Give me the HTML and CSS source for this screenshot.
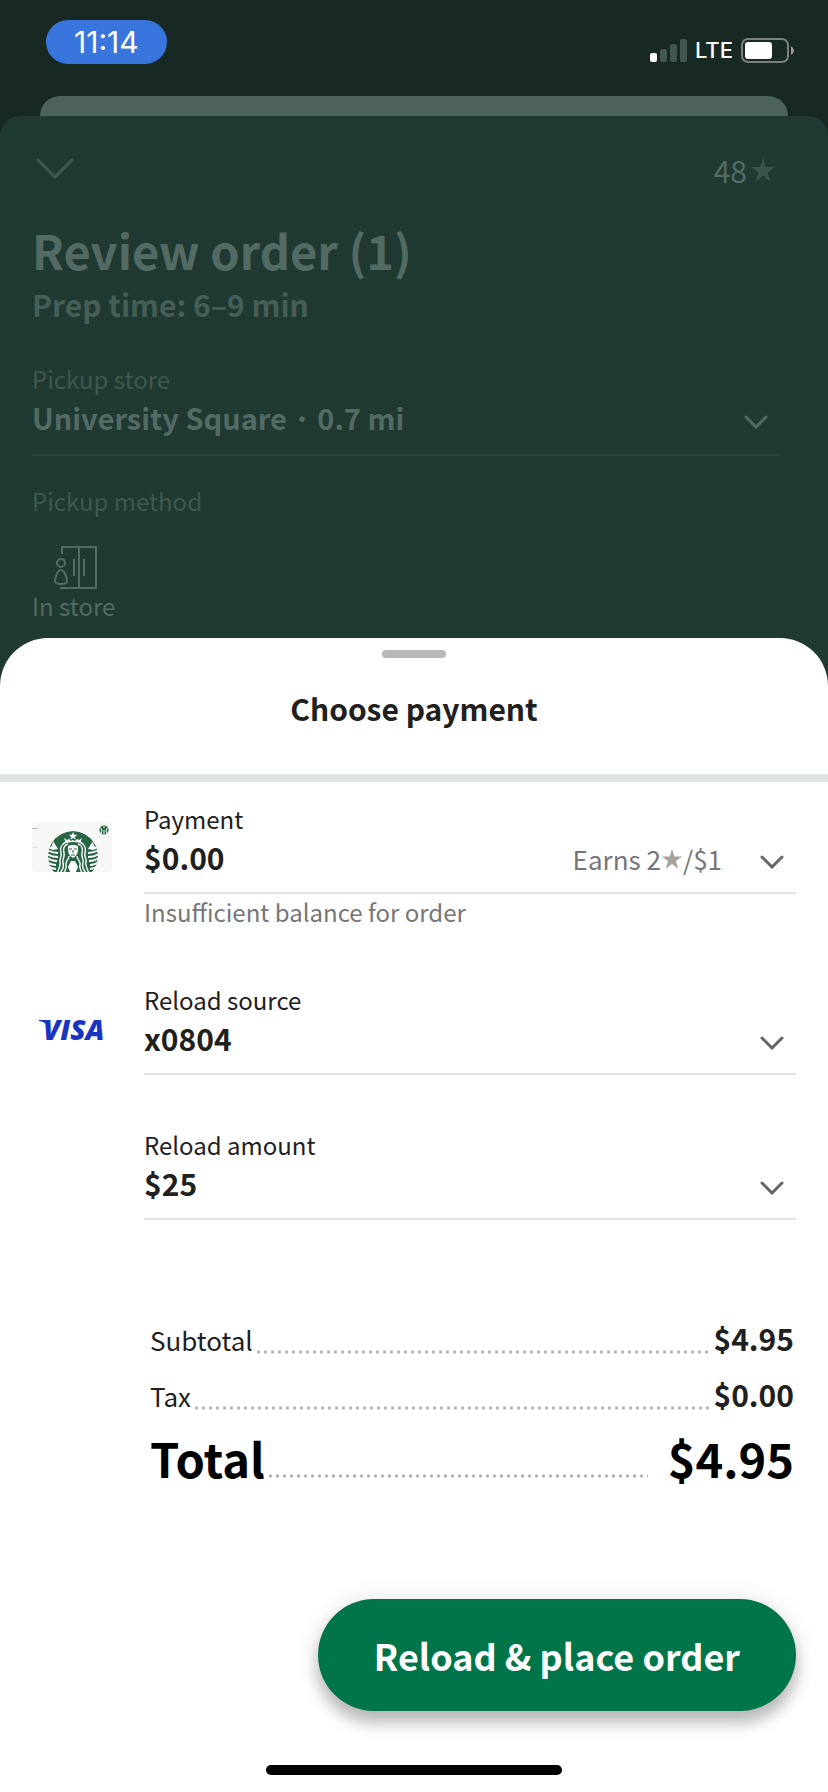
FILE: index.html
```html
<!DOCTYPE html>
<html lang="en">
<head>
    <meta charset="UTF-8">
    <meta name="viewport" content="width=device-width, initial-scale=1.0">
    <title>Review order</title>
    <link rel="stylesheet" href="styles.css">
</head>
<body>
    <header class="status-bar">
        <span class="clock">11:14</span>
        <div class="status-icons">
            <svg class="signal" viewBox="0 0 37 23" aria-hidden="true">
                <rect x="0" y="14" width="7" height="9" rx="2" fill="#fff"/>
                <rect x="10" y="10" width="7" height="13" rx="2" fill="#435752"/>
                <rect x="20" y="5" width="7" height="18" rx="2" fill="#435752"/>
                <rect x="30" y="0" width="7" height="23" rx="2" fill="#435752"/>
            </svg>
            <span class="network">LTE</span>
            <svg class="battery" viewBox="0 0 53 25" aria-hidden="true">
                <rect x="1" y="1" width="46" height="23" rx="6" fill="none" stroke="#7b7f7d" stroke-width="2"/>
                <rect x="4" y="4" width="27" height="17" rx="3" fill="#fff"/>
                <path d="M50 8q3 2 3 4.500t-3 4.500z" fill="#9b9d9c"/>
            </svg>
        </div>
    </header>

    <div class="back-card"></div>

    <main class="order">
        <div class="order-top">
            <button type="button" class="close" aria-label="Close">
                <svg viewBox="0 0 38 21"><path d="M2 2l17 17L36 2" fill="none" stroke="currentColor" stroke-width="3" stroke-linecap="round"/></svg>
            </button>
            <p class="stars">48<svg class="star" viewBox="0 0 24 24"><path d="M12 1l2.600 8.200H23l-6.800 5 2.600 8.300L12 17.400l-6.800 5.100 2.600-8.300L1 9.200h8.400z"/></svg></p>
        </div>
        <h1>Review order (1)</h1>
        <p class="prep">Prep time: 6–9 min</p>

        <div class="field store">
            <label for="store">Pickup store</label>
            <div class="control">
                <select id="store"><option>University Square · 0.7 mi</option></select>
                <svg class="chevron" viewBox="0 0 24 14"><path d="M2 2l10 10L22 2"/></svg>
            </div>
        </div>

        <p class="method-title">Pickup method</p>
        <button type="button" class="method">
            <svg viewBox="0 0 44 45" fill="none" stroke="currentColor" stroke-width="2">
                <path d="M8 9V2h34v41H6M25 2v41M20 14v17M30 14v17" />
                <circle cx="7" cy="18" r="4"/>
                <path d="M7 25c-3 0-6 7-6 11q0 3 6 3t6-3c0-4-3-11-6-11z"/>
            </svg>
            In store
        </button>
    </main>

    <section class="sheet">
        <div class="handle"></div>
        <h2>Choose payment</h2>

        <form class="payment">
            <div class="row">
                <svg class="card" viewBox="0 0 80 50" aria-hidden="true">
                    <defs>
                        <clipPath id="card-clip"><rect width="80" height="50" rx="3"/></clipPath>
                        <clipPath id="seal-clip"><circle cy="34" r="25"/></clipPath>
                        <!-- right half of the siren, mirrored for the left -->
                        <g id="half" fill="none" stroke="#fff">
                            <path d="M5 22c4 1 5 5 4 9s2 6 1 10 0 6 3 10" stroke-width="1.400"/>
                            <path d="M7 20c5 2 6 7 5 11s2 6 1 9 1 7 3 11" stroke-width="1.400"/>
                            <path d="M4 34c0 4 4 5 3 9s1 6 3 9" stroke-width="1.400"/>
                            <path d="M15 27l5-8 1 5 4 2-5 2z" fill="#fff" stroke="none"/>
                            <path d="M15 31q5 0 11-3M15 35q6 0 11-3M16 39q5 0 10-3M17 43q4 0 9-3M17 47q4 0 8-3M18 51q3 0 6-3" stroke-width="2"/>
                        </g>
                    </defs>
                    <g clip-path="url(#card-clip)">
                        <rect width="80" height="50" fill="#f7f7f6"/>
                        <path d="M0 6.500h6" stroke="#bbb"/>
                        <path d="M0 25.500h6" stroke="#e4e4e4"/>
                        <g transform="translate(41 0)" clip-path="url(#seal-clip)">
                            <circle cy="34" r="25" fill="#286545"/>
                            <path d="M0 10l1.200 2.800h3l-2.300 1.900.8 2.900L0 15.900l-2.700 1.700.8-2.900-2.300-1.900h3z" fill="#fff"/>
                            <path d="M-9 16l3 2 2-1 2 2 2-1 2 1 2-2 2 1 3-2-2 5q-7-2-14 0z" fill="#fff"/>
                            <path d="M-5 24q5-2 10 0 1 9-5 12-6-3-5-12z" fill="#fff"/>
                            <path d="M-4 27h3M1 27h3M0 28v3M-2 33h4" stroke="#286545"/>
                            <path d="M-2 39h4l3 6-3 7h-4l-3-7z" fill="#fff"/>
                            <use href="#half"/>
                            <use href="#half" transform="scale(-1 1)"/>
                        </g>
                        <circle cx="72" cy="8" r="4.500" fill="#286545"/>
                        <path d="M69 12q2-3 0-6M75 12q-2-3 0-6M71 5h2M72 8v4" stroke="#f7f7f6" fill="none"/>
                    </g>
                </svg>
                <div class="field">
                    <label for="card">Payment</label>
                    <div class="control">
                        <select id="card"><option>$0.00</option></select>
                        <span class="earns">Earns 2<svg class="star" viewBox="0 0 24 24"><path d="M12 1l2.600 8.200H23l-6.800 5 2.600 8.300L12 17.400l-6.800 5.100 2.600-8.300L1 9.200h8.400z"/></svg>/$1</span>
                        <svg class="chevron" viewBox="0 0 24 14"><path d="M2 2l10 10L22 2"/></svg>
                    </div>
                    <p class="note">Insufficient balance for order</p>
                </div>
            </div>

            <div class="row">
                <svg class="visa" viewBox="0 0 80 48">
                    <path d="M7 12h9l2 8Q14 14 7 13z"/>
                    <text x="11" y="32">VISA</text>
                </svg>
                <div class="field">
                    <label for="source">Reload source</label>
                    <div class="control">
                        <select id="source"><option>x0804</option></select>
                        <svg class="chevron" viewBox="0 0 24 14"><path d="M2 2l10 10L22 2"/></svg>
                    </div>
                </div>
            </div>

            <div class="row">
                <span></span>
                <div class="field">
                    <label for="amount">Reload amount</label>
                    <div class="control">
                        <select id="amount"><option>$25</option></select>
                        <svg class="chevron" viewBox="0 0 24 14"><path d="M2 2l10 10L22 2"/></svg>
                    </div>
                </div>
            </div>

            <dl class="totals">
                <div class="line"><dt>Subtotal</dt><dd>$4.95</dd></div>
                <div class="line"><dt>Tax</dt><dd>$0.00</dd></div>
                <div class="line total"><dt>Total</dt><dd>$4.95</dd></div>
            </dl>

            <button type="submit" class="submit">Reload &amp; place order</button>
        </form>
        <div class="home"></div>
    </section>
</body>
</html>
```
FILE: styles.css
```css
*{
    margin: 0;
    padding: 0;
    box-sizing: border-box;
}

body{
    min-height: 100vh;
    display: flex;
    flex-direction: column;
    background-color: #182924;
    font-family: "Noto Sans CJK JP", "Noto Sans", sans-serif;
    font-size: 24px;
    line-height: 36px;
    color: #1f2020;
}

button, select{
    font: inherit;
    color: inherit;
    border: none;
    background: transparent;
    appearance: none;
}

svg{
    display: block;
}

/* status bar */
.status-bar{
    height: 96px;
    padding: 20px 34px 0 46px;
    display: flex;
    justify-content: space-between;
    align-items: flex-start;
    font-family: Inter, sans-serif;
    color: white;
}

.clock{
    padding: 0 28px;
    border-radius: 22px;
    background-color: #3875dc;
    font-size: 30px;
    line-height: 44px;
}

.status-icons{
    padding-top: 16px;
    display: flex;
    align-items: center;
    gap: 8px;
}

.signal{
    width: 37px;
}

.network{
    font-size: 22px;
    line-height: 28px;
    font-weight: 500;
}

.battery{
    width: 53px;
}

.back-card{
    height: 20px;
    margin: 0 40px;
    border-radius: 20px 20px 0 0;
    background-color: #4d625b;
}

/* dimmed order page, its foot runs under the sheet */
.order{
    padding: 32px 48px 64px 32px;
    margin-bottom: -48px;
    border-radius: 20px 20px 0 0;
    background-color: #203932;
    color: #536b64;
}

.order-top{
    display: flex;
    justify-content: space-between;
    align-items: center;
    margin-bottom: 30px;
}

.close{
    padding: 0 4px 4px;
    color: #3f5750;
}

.close svg{
    width: 38px;
}

.stars{
    display: flex;
    align-items: center;
    gap: 3px;
    padding-right: 4px;
    font-size: 30px;
    line-height: 44px;
}

.star{
    width: 26px;
    fill: #3c534d;
}

h1{
    font-size: 47px;
    line-height: 56px;
}

.prep{
    margin-top: 2px;
    font-size: 30px;
    line-height: 48px;
    font-weight: bold;
    color: #465e57;
}

.store{
    margin-top: 33px;
}

.store label, .method-title{
    color: #3f5750;
}

.method-title{
    margin: 27px 0 26px;
}

.method{
    display: flex;
    flex-direction: column;
    line-height: 32px;
}

.method svg{
    width: 44px;
    margin-left: 22px;
}

/* labelled drop-downs */
.field{
    flex: 1;
}

label{
    display: block;
}

.control{
    display: flex;
    align-items: center;
    padding: 0 12px 15px 0;
    border-bottom: 2px solid #dde4e2;
}

select{
    flex: 1;
    min-width: 0;
    height: 40px;
    font-size: 30px;
    line-height: 40px;
    font-weight: bold;
}

.chevron{
    width: 24px;
    margin-top: 10px;
    fill: none;
    stroke: #666;
    stroke-width: 3;
    stroke-linecap: round;
}

.store .control{
    padding-bottom: 17px;
    border-color: #2a423b;
}

.store select{
    font-size: 29px;
}

.store .chevron{
    stroke: #536b64;
}

/* payment sheet */
.sheet{
    flex: 1;
    padding: 12px 0 16px;
    border-radius: 48px 48px 0 0;
    background-color: white;
}

.handle{
    width: 64px;
    height: 8px;
    margin: 0 auto 28px;
    border-radius: 4px;
    background-color: #b8b8b8;
}

h2{
    padding-bottom: 44px;
    border-bottom: 8px solid #dde5e2;
    font-size: 30px;
    line-height: 44px;
    text-align: center;
}

.payment{
    padding: 19px 32px 0;
}

.row{
    display: flex;
    gap: 32px;
    margin-bottom: 52px;
}

.row > :first-child{
    width: 80px;
}

.card{
    height: 50px;
    margin-top: 21px;
}

.visa{
    height: 48px;
    margin-top: 26px;
    fill: #1a34c2;
    font-family: "Open Sans", sans-serif;
    font-size: 28px;
    font-style: italic;
    font-weight: 800;
}

.earns{
    display: flex;
    align-items: center;
    margin: 4px 38px 0 0;
    font-size: 26px;
    color: #767676;
}

.earns .star{
    width: 22px;
    fill: #a8a49c;
}

.note{
    color: #767676;
}

/* order totals */
.totals{
    margin: 90px 2px 105px 118px;
}

.line{
    display: flex;
    align-items: baseline;
    height: 56px;
    line-height: 56px;
}

dt{
    flex: 1;
    display: flex;
    font-size: 26px;
}

/* dotted leader */
dt::after{
    content: "";
    flex: 1;
    height: 4px;
    margin: 38px 4px 0 2px;
    background: radial-gradient(circle, #aaa 1px, transparent 2px) 0 0 / 7px 4px repeat-x;
}

dd{
    font-size: 30px;
    font-weight: bold;
}

.total{
    height: 72px;
    line-height: 72px;
    color: black;
}

.total dt, .total dd{
    font-size: 47px;
    font-weight: bold;
}

.total dt::after{
    margin: 52px 20px 0 2px;
}

.submit{
    display: block;
    margin-left: auto;
    padding: 0 56px;
    border-radius: 56px;
    background-color: #00754a;
    box-shadow: 0 12px 16px rgba(0, 0, 0, 0.25), 0 0 24px rgba(0, 0, 0, 0.1);
    color: white;
    font-size: 36px;
    line-height: 112px;
    font-weight: bold;
}

.home{
    width: 296px;
    height: 10px;
    margin: 54px auto 0;
    border-radius: 5px;
    background-color: black;
}
```
